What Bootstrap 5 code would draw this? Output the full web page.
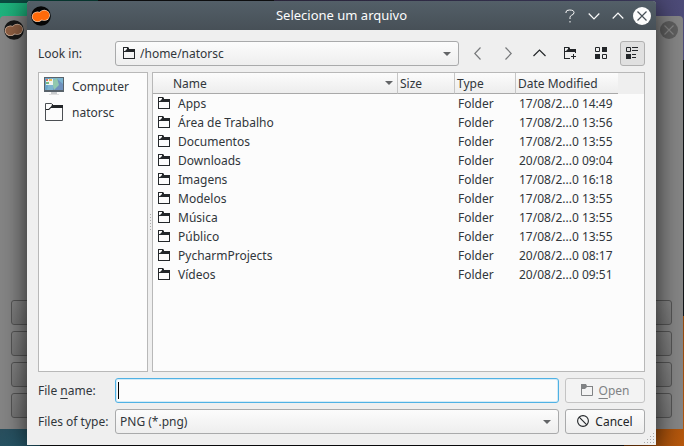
<!DOCTYPE html>
<html lang="en">
<head>
<meta charset="utf-8">
<meta name="viewport" content="width=device-width, initial-scale=1">
<title>Selecione um arquivo</title>
<link href="https://cdn.jsdelivr.net/npm/bootstrap@5.3.0/dist/css/bootstrap.min.css" rel="stylesheet">
<style>
  body {
    font: 12px/19px "Noto Sans", sans-serif;
    color: #31363b;
    background:
      linear-gradient(#0a4a40, #0a4a40) 0 0 / 98px 3px no-repeat,
      linear-gradient(90deg, #1fb37d, #17a06f) 0 0 / 60px 60px no-repeat,
      linear-gradient(90deg, #39324f, #4d4b78) 100% 0 / 60% 60px no-repeat,
      linear-gradient(135deg, #2c4a58, #23596b) 0 100% / 40px 40px no-repeat,
      linear-gradient(115deg, #6e3408, #b8590d) 100% 100% / 60px 130px no-repeat,
      #121416;
  }
  button, input, select { font: inherit; color: inherit; }
  svg { display: block; flex: none; }

  .desktop { min-height: 100vh; padding: 1px 28px 1px 27px; overflow: hidden; }

  /* parent window behind the dialog */
  .parent-window {
    position: absolute; top: 16px; right: 1px; bottom: 17px; left: 0;
    padding: 11px; gap: 6px; background: #858585; border-radius: 4px 4px 0 0;
  }
  .parent-title { position: absolute; top: 4px; right: 5px; left: 4px; }
  .parent-btn { height: 25px; border: 1px solid #555; border-radius: 3px; background: linear-gradient(#838383, #777); }

  .dialog-window {
    position: relative; background: #efefef;
    border-radius: 4px 4px 0 0; box-shadow: 0 4px 26px rgba(0,0,0,.75);
  }
  .titlebar {
    height: 29px; padding: 0 4px; color: #fcfcfc;
    background: linear-gradient(#535f68, #475057); border-radius: 3px 3px 0 0;
  }
  .titlebar h1 { font-size: 13px; line-height: 19px; padding-left: 72px; }
  .titlebar button, .tool { border: 0; background: none; padding: 0; display: flex; align-items: center; justify-content: center; }
  .titlebar button { width: 20px; height: 20px; }
  .content { padding: 11px; gap: 6px; }
  .line { gap: 6px; }
  .caption { width: 71px; white-space: nowrap; }
  u { text-underline-offset: 3px; }

  .combo {
    height: 25px; width: 100%; padding: 0 4px; border: 1px solid #a9aaab; border-radius: 3px;
    appearance: none; white-space: nowrap;
    background: url("data:image/svg+xml,%3Csvg xmlns='http://www.w3.org/2000/svg' width='8' height='4'%3E%3Cpath d='M0 0h8L4 4z' fill='%23636567'/%3E%3C/svg%3E") right 7px center no-repeat, linear-gradient(#fcfcfc, #eeeeee);
  }
  .combo-path { padding-left: 24px; }
  .combo-icon { position: absolute; left: 8px; top: 6px; pointer-events: none; color: #232629; }
  .tool { width: 25px; height: 25px; border-radius: 3px; color: #232629; }
  .tool:disabled { color: #77797b; }
  .tool.pressed { background: #e0e0e0; border: 1px solid #b0b0b0; }

  .panes { min-height: 200px; }
  .places, .files { background: #fcfcfc; border: 1px solid #b8b8b8; }
  .places { width: 110px; }
  .places a { height: 26px; padding-left: 5px; gap: 8px; color: inherit; text-decoration: none; }
  .splitter { width: 4px; }
  .splitter i { width: 1px; height: 17px; background: repeating-linear-gradient(#aaa 0 1px, transparent 1px 3px); }

  .files table { width: 100%; table-layout: fixed; border-collapse: separate; border-spacing: 0; white-space: nowrap; }
  .files th { height: 21px; padding: 0 0 0 2px; font-weight: 400; border-right: 1px solid #c6c6c6; border-bottom: 1px solid #a9a9a9; background: linear-gradient(#fcfcfc, #ededed); }
  .files th:first-child { padding: 0 4px 0 20px; }
  .files th:nth-child(4) { border-right: 0; }
  .files th.filler { border: 0; background: #efefef; }
  .files td { height: 19px; padding: 0 0 0 3px; line-height: 19px; }
  .files td:first-child { padding-left: 5px; }
  .w-name { width: auto; } .w-size { width: 57px; } .w-type { width: 61px; } .w-date { width: 102px; } .w-fill { width: 26px; }
  .entry { gap: 8px; }
  .entry svg { color: #232629; }
  /* an odd total height keeps the 12px icons on whole pixels */
  .entry svg, .action svg { margin-bottom: 1px; }

  .name-input {
    height: 25px; min-width: 0; border: 1px solid #4fb1e4; border-radius: 3px; padding: 0 4px; outline: 0;
    box-shadow: inset 0 0 0 1px #d3ebf7;
    background: linear-gradient(#000, #000) 2px 3px / 1px 17px no-repeat, #fcfcfc;
  }
  .action { width: 80px; height: 25px; padding: 0; gap: 6px; border: 1px solid #a9aaab; border-radius: 3px; background: linear-gradient(#fcfcfc, #eeeeee); color: #232629; }
  .action:disabled { color: #808284; border-color: #c4c4c4; background: #f3f3f3; }
  .grip { position: absolute; right: 2px; bottom: 2px; color: #aaa; }
</style>
</head>
<body>
<svg width="0" height="0" class="position-absolute" aria-hidden="true">
  <defs>
    <symbol id="folder" viewBox="0 0 12 12">
      <path d="M0 0H5L6 1V2H12V12H0ZM1 1V4H2L4 2V1ZM1 5V11H11V5Z" fill="currentColor" fill-rule="evenodd"/>
    </symbol>
    <symbol id="app" viewBox="0 0 20 20">
      <circle cx="10" cy="10" r="9.800" fill="#050505"/>
      <g fill="#f8d8c0"><ellipse cx="6.500" cy="10.800" rx="5.700" ry="5.200"/><ellipse cx="13.200" cy="9.300" rx="5.700" ry="5.500"/></g>
      <g fill="currentColor"><ellipse cx="6.500" cy="10.800" rx="5.100" ry="4.600"/><ellipse cx="13.200" cy="9.300" rx="5.100" ry="4.900"/></g>
    </symbol>
  </defs>
</svg>

<div class="desktop position-relative d-flex">
  <div class="parent-window d-flex flex-column justify-content-end" aria-hidden="true">
    <div class="parent-title d-flex justify-content-between">
      <svg width="20" height="20" opacity=".85" style="color:#935a38"><use href="#app"/></svg>
      <svg width="18" height="20" viewBox="0 0 18 20"><circle cx="9" cy="10" r="9" fill="#5f5f5f"/><path d="M4.500 5.500l9 9m0-9l-9 9" stroke="#858585" stroke-width="1.200"/></svg>
    </div>
    <button class="parent-btn" disabled></button>
    <button class="parent-btn" disabled></button>
    <button class="parent-btn" disabled></button>
    <button class="parent-btn" disabled></button>
  </div>

  <main class="dialog-window flex-grow-1 d-flex flex-column">
    <header class="titlebar d-flex align-items-center">
      <svg width="20" height="20" style="color:#ff6a0a"><use href="#app"/></svg>
      <h1 class="m-0 fw-normal text-center flex-grow-1">Selecione um arquivo</h1>
      <div class="d-flex gap-1">
        <button type="button" aria-label="Help"><svg width="12" height="14" viewBox="0 0 12 14" fill="none" stroke="currentColor"><path d="M2 4V3Q2 1 5.500 1Q10 1 10 3.500Q10 5.500 7.500 6.300Q6 7 6 8.500V10M6 12V13.500"/></svg></button>
        <button type="button" aria-label="Minimize"><svg width="12" height="12" viewBox="0 0 12 12" fill="none" stroke="currentColor" stroke-width="1.200"><path d="M.7 3.500L6 8.800L11.300 3.500"/></svg></button>
        <button type="button" aria-label="Maximize"><svg width="12" height="12" viewBox="0 0 12 12" fill="none" stroke="currentColor" stroke-width="1.200"><path d="M.7 8.500L6 3.200L11.300 8.500"/></svg></button>
        <button type="button" aria-label="Close"><svg width="18" height="18" viewBox="0 0 18 18"><circle cx="9" cy="9" r="9" fill="#fcfcfc"/><path d="M4.500 4.500l9 9m0-9l-9 9" stroke="#475057" stroke-width="1.200"/></svg></button>
      </div>
    </header>

    <form class="content flex-grow-1 d-flex flex-column">
      <div class="line d-flex align-items-center">
        <label class="caption flex-shrink-0" for="lookIn">Look in:</label>
        <div class="position-relative flex-grow-1">
          <select class="combo combo-path" id="lookIn"><option>/home/natorsc</option></select>
          <svg class="combo-icon" width="12" height="12"><use href="#folder"/></svg>
        </div>
        <button type="button" class="tool" disabled aria-label="Back"><svg width="7" height="13" viewBox="0 0 7 13" fill="none" stroke="currentColor" stroke-width="1.200"><path d="M6.500 .5L.8 6.500L6.500 12.500"/></svg></button>
        <button type="button" class="tool" disabled aria-label="Forward"><svg width="7" height="13" viewBox="0 0 7 13" fill="none" stroke="currentColor" stroke-width="1.200"><path d="M.5 .5L6.200 6.500L.5 12.500"/></svg></button>
        <button type="button" class="tool" aria-label="Parent directory"><svg width="13" height="9" viewBox="0 0 13 9" fill="none" stroke="currentColor" stroke-width="1.200"><path d="M.5 7L6.500 1L12.500 7"/></svg></button>
        <button type="button" class="tool" aria-label="Create new folder"><svg width="13" height="13" viewBox="0 0 13 13" fill="currentColor"><path d="M0 0H5L6 1V2H12V6H11V5H1V11H6V12H0ZM1 1V4H2L4 2V1Z" fill-rule="evenodd"/><path d="M9 7h1v2h2v1h-2v2H9v-2H7V9h2z"/></svg></button>
        <button type="button" class="tool" aria-label="List view"><svg width="13" height="13" viewBox="0 0 13 13" fill="currentColor"><path d="M7 0h5v5H7zM0 7h5v5H0z"/><path d="M.5.500h4v4h-4zM7.500 7.500h4v4h-4z" fill="none" stroke="currentColor"/></svg></button>
        <button type="button" class="tool pressed" aria-label="Detail view" aria-pressed="true"><svg width="13" height="13" viewBox="0 0 13 13" fill="currentColor"><path d="M0 7h5v5H0zM6 0h6v1H6zM6 3h6v1H6zM6 7h4v1H6zM6 10h4v1H6z"/><path d="M.5.500h4v4h-4z" fill="none" stroke="currentColor"/></svg></button>
      </div>

      <div class="panes flex-grow-1 d-flex">
        <nav class="places flex-shrink-0" aria-label="Places">
          <a href="#" class="d-flex align-items-center">
            <svg width="20" height="18" viewBox="0 0 20 18"><path d="M0 0h20v15H0z" fill="#59636b"/><path d="M1 1h18v12H1z" fill="#7cb5d0"/><path d="M1 1h5l-3 12H1z" fill="#6aa5c9"/><path d="M12 1l7 6v6H9z" fill="#6f91bd"/><path d="M8 4l5-3 2 7-5 5z" fill="#90c8ae"/><path d="M2 2h7v6H2z" fill="#eef3ee"/><path d="M2 2h2v2H2z" fill="#e36f5e"/><path d="M5 2h3v2H5z" fill="#e8bd55"/><path d="M2 5h3v2H2z" fill="#78b984"/><path d="M7 15h6v2H7z" fill="#c9cbcd"/><path d="M5 17h10v1H5z" fill="#e0e0e0"/></svg>
            Computer</a>
          <a href="#" class="d-flex align-items-center">
            <svg width="20" height="18" viewBox="0 0 20 18"><path d="M1.500 17.500V.5H7.500L9.500 2.500H18.500V17.500Z" fill="none" stroke="#4b4f53"/><path d="M8 1L9 2H19V5H7L5 7H2V6H4.500L7.500 3Z" fill="#232629"/></svg>
            natorsc</a>
        </nav>
        <div class="splitter flex-shrink-0 d-flex align-items-center justify-content-center"><i></i></div>
        <div class="files flex-grow-1">
          <table>
            <colgroup><col class="w-name"><col class="w-size"><col class="w-type"><col class="w-date"><col class="w-fill"></colgroup>
            <thead><tr>
              <th scope="col"><span class="d-flex justify-content-between align-items-center">Name <svg width="8" height="4" viewBox="0 0 8 4"><path d="M0 0h8L4 4z" fill="#636567"/></svg></span></th>
              <th scope="col">Size</th><th scope="col">Type</th><th scope="col">Date Modified</th><th class="filler"></th>
            </tr></thead>
            <tbody>
              <tr><td><span class="entry d-flex align-items-center"><svg width="12" height="12"><use href="#folder"/></svg>Apps</span></td><td></td><td>Folder</td><td>17/08/2...0 14:49</td><td></td></tr>
              <tr><td><span class="entry d-flex align-items-center"><svg width="12" height="12"><use href="#folder"/></svg>Área de Trabalho</span></td><td></td><td>Folder</td><td>17/08/2...0 13:56</td><td></td></tr>
              <tr><td><span class="entry d-flex align-items-center"><svg width="12" height="12"><use href="#folder"/></svg>Documentos</span></td><td></td><td>Folder</td><td>17/08/2...0 13:55</td><td></td></tr>
              <tr><td><span class="entry d-flex align-items-center"><svg width="12" height="12"><use href="#folder"/></svg>Downloads</span></td><td></td><td>Folder</td><td>20/08/2...0 09:04</td><td></td></tr>
              <tr><td><span class="entry d-flex align-items-center"><svg width="12" height="12"><use href="#folder"/></svg>Imagens</span></td><td></td><td>Folder</td><td>17/08/2...0 16:18</td><td></td></tr>
              <tr><td><span class="entry d-flex align-items-center"><svg width="12" height="12"><use href="#folder"/></svg>Modelos</span></td><td></td><td>Folder</td><td>17/08/2...0 13:55</td><td></td></tr>
              <tr><td><span class="entry d-flex align-items-center"><svg width="12" height="12"><use href="#folder"/></svg>Música</span></td><td></td><td>Folder</td><td>17/08/2...0 13:55</td><td></td></tr>
              <tr><td><span class="entry d-flex align-items-center"><svg width="12" height="12"><use href="#folder"/></svg>Público</span></td><td></td><td>Folder</td><td>17/08/2...0 13:55</td><td></td></tr>
              <tr><td><span class="entry d-flex align-items-center"><svg width="12" height="12"><use href="#folder"/></svg>PycharmProjects</span></td><td></td><td>Folder</td><td>20/08/2...0 08:17</td><td></td></tr>
              <tr><td><span class="entry d-flex align-items-center"><svg width="12" height="12"><use href="#folder"/></svg>Vídeos</span></td><td></td><td>Folder</td><td>20/08/2...0 09:51</td><td></td></tr>
            </tbody>
          </table>
        </div>
      </div>

      <div class="line d-flex align-items-center">
        <label class="caption flex-shrink-0" for="fileName">File <u>n</u>ame:</label>
        <input class="name-input flex-grow-1" id="fileName" type="text">
        <button type="button" class="action flex-shrink-0 d-flex align-items-center justify-content-center" disabled><svg width="12" height="12" viewBox="0 0 12 12"><path d="M.5 11.500V2.500H11.500V11.500Z" fill="none" stroke="currentColor"/><path d="M0 0H5L6 2H12V3H6L4 5H0Z" fill="currentColor"/></svg><span><u>O</u>pen</span></button>
      </div>
      <div class="line d-flex align-items-center">
        <label class="caption flex-shrink-0" for="fileType">Files of type:</label>
        <div class="flex-grow-1"><select class="combo" id="fileType"><option>PNG (*.png)</option></select></div>
        <button type="button" class="action flex-shrink-0 d-flex align-items-center justify-content-center"><svg width="12" height="12" viewBox="0 0 12 12" fill="none" stroke="currentColor" stroke-width="1.100"><circle cx="6" cy="6" r="5.400"/><path d="M2.200 2.200l7.600 7.600"/></svg>Cancel</button>
      </div>
    </form>
    <svg class="grip" width="10" height="10" viewBox="0 0 10 10" fill="currentColor" aria-hidden="true"><path d="M9 0h1v1H9zM6 3h1v1H6zM9 3h1v1H9zM3 6h1v1H3zM6 6h1v1H6zM9 6h1v1H9zM0 9h1v1H0zM3 9h1v1H3zM6 9h1v1H6zM9 9h1v1H9z"/></svg>
  </main>
</div>
<script src="https://cdn.jsdelivr.net/npm/bootstrap@5.3.0/dist/js/bootstrap.bundle.min.js"></script>
</body>
</html>
